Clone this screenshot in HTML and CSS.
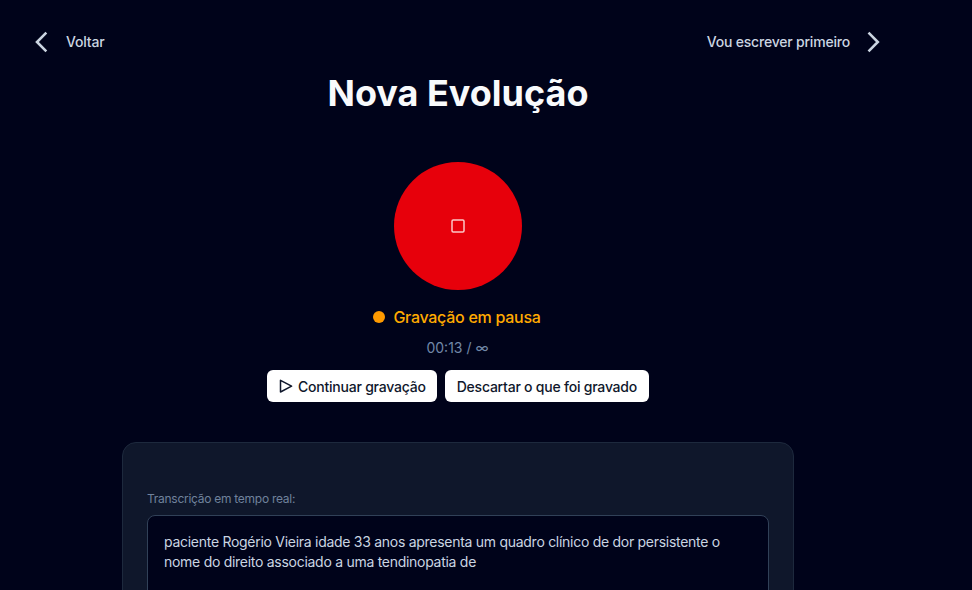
FILE: index.html
```html
<!DOCTYPE html>
<html lang="pt-BR">
<head>
  <meta charset="UTF-8" />
  <title>Nova Evolução</title>
  <link rel="stylesheet" href="styles.css">
</head>
<body>
  <div class="page">
    <div class="top-nav">
      <a href="#" class="nav-link">
        <svg class="chevron" viewBox="0 0 24 24"><path d="M14 4 L6 12 L14 20" /></svg>
        <span class="nav-text">Voltar</span>
      </a>
      <a href="#" class="nav-link">
        <span class="nav-text">Vou escrever primeiro</span>
        <svg class="chevron" viewBox="0 0 24 24"><path d="M9 4 L17 12 L9 20" /></svg>
      </a>
    </div>

    <h1 class="title">Nova Evolução</h1>

    <div class="recorder">
      <button class="record-button">
        <svg class="stop-icon" viewBox="0 0 14 14"><rect x="1" y="1" width="12" height="12" rx="1.2" /></svg>
      </button>
      <div class="status"><span class="status-dot"></span>Gravação em pausa</div>
      <div class="timer">00:13 / ∞</div>
      <div class="actions">
        <button class="action-button action-button-icon">
          <svg class="play-icon" viewBox="0 0 16 16"><path d="M1.5 2.3 L12.6 8.2 L1.5 14 Z" /></svg>
          Continuar gravação
        </button>
        <button class="action-button action-button-text">Descartar o que foi gravado</button>
      </div>
    </div>

    <div class="card">
      <label class="transcript-label">Transcrição em tempo real:</label>
      <div class="transcript">paciente Rogério Vieira idade 33 anos apresenta um quadro clínico de dor persistente o nome do direito associado a uma tendinopatia de</div>
    </div>
  </div>
</body>
</html>
```
FILE: styles.css
```css
html, body {
  margin: 0;
  height: 100%;
  overflow: hidden;
}
body {
  background: #00031a;
  font-family: "Inter", "Liberation Sans", sans-serif;
  color: #fff;
}
.page {
  width: 916px;
  box-sizing: border-box;
  padding-top: 30px;
}

/* topo */
.top-nav {
  display: flex;
  justify-content: space-between;
  align-items: center;
  padding: 0 30px;
  height: 24px;
}
.nav-link {
  display: flex;
  align-items: center;
  gap: 8px;
  color: #cbd5e1;
  font-size: 14px;
  font-weight: 500;
  letter-spacing: -0.2px;
  text-decoration: none;
}
.nav-text {
  padding-bottom: 2px;
}
.chevron {
  width: 28px;
  height: 28px;
  fill: none;
  stroke: #cbd5e1;
  stroke-width: 2.2;
}
.title {
  margin: 18px 0 0;
  text-align: center;
  font-size: 36px;
  line-height: 42px;
  font-weight: 700;
  color: #f8fafc;
}

/* gravador */
.recorder {
  display: flex;
  flex-direction: column;
  align-items: center;
  margin-top: 48px;
}
.record-button {
  width: 128px;
  height: 128px;
  border: none;
  border-radius: 50%;
  background: #e7000b;
  padding: 0;
  display: flex;
  align-items: center;
  justify-content: center;
}
.stop-icon {
  width: 14px;
  height: 14px;
  fill: none;
  stroke: #fbc8c8;
  stroke-width: 1.5;
}
.status {
  display: flex;
  align-items: center;
  gap: 8px;
  margin-top: 15px;
  padding-right: 2px;
  font-size: 16px;
  line-height: 24px;
  font-weight: 500;
  letter-spacing: -0.27px;
  color: #ffaa00;
}
.status-dot {
  width: 12px;
  height: 12px;
  border-radius: 50%;
  background: #fe9a00;
}
.timer {
  margin-top: 9px;
  padding-right: 1px;
  font-size: 14px;
  line-height: 20px;
  color: #7188a8;
}
.actions {
  display: flex;
  gap: 8px;
  margin-top: 12px;
}
.action-button {
  display: flex;
  align-items: center;
  gap: 3px;
  height: 32px;
  padding: 0 12px;
  border: none;
  border-radius: 6px;
  background: #fff;
  color: #0f172b;
  font-family: inherit;
  font-size: 14px;
  font-weight: 500;
  letter-spacing: -0.22px;
}
.action-button-icon {
  padding-right: 11px;
}
.action-button-text {
  padding: 0 12px;
}
.play-icon {
  width: 16px;
  height: 16px;
  fill: none;
  stroke: #0f172b;
  stroke-width: 1.5;
  stroke-linejoin: round;
}

/* transcricao */
.card {
  width: 672px;
  box-sizing: border-box;
  margin: 40px auto 0;
  padding: 48px 24px 24px;
  background: #0f172b;
  border: 1px solid #1d293d;
  border-radius: 14px;
}
.transcript-label {
  display: block;
  font-size: 12px;
  line-height: 16px;
  letter-spacing: -0.27px;
  color: #6f829c;
  margin-bottom: 8px;
}
.transcript {
  height: 200px;
  box-sizing: border-box;
  padding: 16px;
  background: #00031a;
  border: 1px solid #314158;
  border-radius: 8px;
  font-size: 14px;
  line-height: 20px;
  letter-spacing: -0.28px;
  color: #cad5e2;
}
```
